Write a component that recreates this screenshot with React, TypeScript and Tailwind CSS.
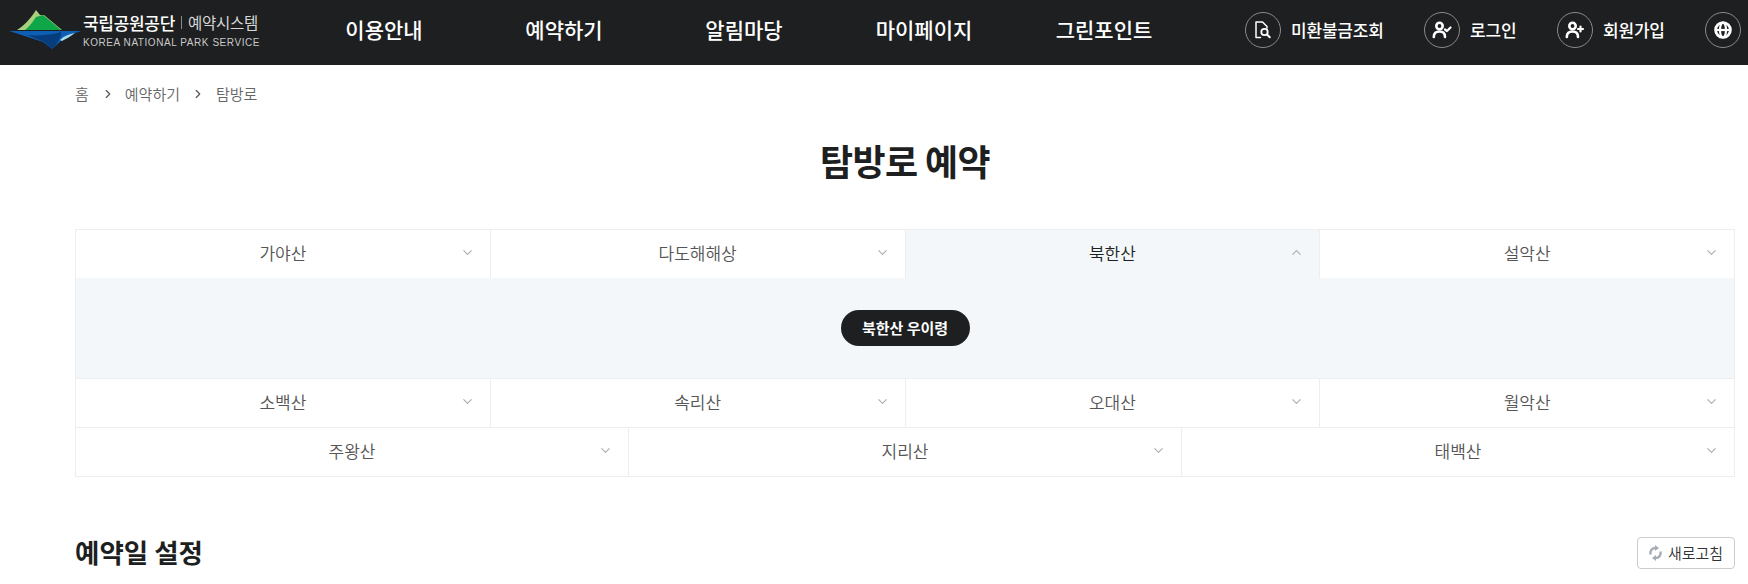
import {ChevronDown, ChevronRight, ChevronUp} from "lucide-react";

const font = {fontFamily: '"Noto Sans CJK KR", sans-serif'};

function Logo() {
    return (
        <div className="flex items-center">
            <svg width="74" height="42" viewBox="0 0 74 42" className="shrink-0">
                <path d="M8 21 C15 17 22 9 27 1 L31 6 L35 6 L53 21 Z" fill="#a8cf7c"/>
                <path d="M16 21 C21 17 25 11 27 8 L34 6 L52 21 Z" fill="#0fa64a"/>
                <path d="M0 22 L72 22 C62 25 58 28 53 31 L43 40 L34 33 C22 29 10 25 0 22 Z" fill="#0e5fb4"/>
                <path d="M18 26 C30 27 42 26 52 23 C53 28 48 35 43 40 L35 33 C29 30 23 28 18 26 Z" fill="#073d7c"/>
                <path d="M51 31 C55 27 60 25 66 24 C62 27 57 30 53 32 Z" fill="#a9dcec"/>
            </svg>
            <div className="flex flex-col">
                <div className="flex items-center h-[24px] leading-none">
                    <span className="text-white text-[17px] font-medium tracking-[-0.3px]">국립공원공단</span>
                    <span className="w-px h-[13px] bg-[#8a8a8a] mx-[6px]"></span>
                    <span className="text-[#d6d6d6] text-[15.5px] tracking-[-0.3px]">예약시스템</span>
                </div>
                <span className="mt-[1px] text-[#c9c9c9] text-[10px] leading-[14px] font-['Liberation_Sans'] tracking-[0.56px] whitespace-nowrap">KOREA NATIONAL PARK SERVICE</span>
            </div>
        </div>
    )
}

function DocSearchIcon() {
    return (
        <svg width="18" height="18" viewBox="0 0 18 18" fill="none" stroke="#ffffff" strokeWidth="1.5" strokeLinecap="round" strokeLinejoin="round">
            <path d="M6.5 16.5 H2 V1 H8.5 L13 5.5 V7"/>
            <circle cx="10.5" cy="11" r="3.2" strokeWidth="1.8"/>
            <path d="M13 13.5 L15.8 16.3" strokeWidth="2"/>
        </svg>
    )
}

function UserCheckIcon() {
    return (
        <svg width="20" height="18" viewBox="0 0 20 18" fill="none" stroke="#ffffff" strokeLinecap="round" strokeLinejoin="round">
            <circle cx="7.5" cy="5" r="3.2" strokeWidth="2.6"/>
            <path d="M1.8 16 C1.8 12 4 10.5 7.5 10.5 C11 10.5 13 12 13 16" strokeWidth="2.6"/>
            <path d="M13 8.5 L15 10 L18.5 6.5" strokeWidth="2.2"/>
        </svg>
    )
}

function UserPlusIcon() {
    return (
        <svg width="20" height="18" viewBox="0 0 20 18" fill="none" stroke="#ffffff" strokeLinecap="round" strokeLinejoin="round">
            <circle cx="7.5" cy="5" r="3.2" strokeWidth="2.6"/>
            <path d="M1.8 16 C1.8 12 4 10.5 7.5 10.5 C11 10.5 13 12 13 16" strokeWidth="2.6"/>
            <path d="M15.5 5.5 V10.5 M13 8 H18" strokeWidth="2.2"/>
        </svg>
    )
}

function GlobeIcon() {
    return (
        <svg width="18" height="18" viewBox="0 0 18 18" fill="none" stroke="#ffffff">
            <circle cx="9" cy="9" r="7.4" strokeWidth="2.8"/>
            <ellipse cx="9" cy="9" rx="3" ry="7.5" strokeWidth="2.2"/>
            <path d="M1.5 9 H16.5" strokeWidth="2.2"/>
        </svg>
    )
}

function RefreshIcon() {
    return (
        <svg width="13" height="16" viewBox="0 0 13 16" fill="none" stroke="#a6adb5" strokeWidth="2.4">
            <path d="M1.6 9.5 C0.8 5.5 3 3 6.5 3"/>
            <path d="M11.4 6.5 C12.2 10.5 10 13 6.5 13"/>
            <path d="M6 0 L10 3 L6 6 Z" fill="#a6adb5" stroke="none"/>
            <path d="M7 10 L3 13 L7 16 Z" fill="#a6adb5" stroke="none"/>
        </svg>
    )
}

function Util({label, icon, width}: {label?: string, icon: React.ReactNode, width: string}) {
    return (
        <a href="#" className={`flex items-center ${width}`}>
            <span className="size-[36px] rounded-full border border-[#8b8b8b] flex items-center justify-center shrink-0">{icon}</span>
            {label && <span className="ml-[10px] text-white text-[17px] tracking-[-0.2px] font-medium whitespace-nowrap">{label}</span>}
        </a>
    )
}

function Header() {
    return (
        <header className="h-[65px] pb-[5px] bg-[#1e1f21] flex items-center">
            <div className="ml-[9px] w-[260px]"><Logo/></div>
            <nav className="flex items-center ml-[25px] text-white text-[21px] font-medium whitespace-nowrap">
                <a href="#" className="w-[180px] text-center">이용안내</a>
                <a href="#" className="w-[180px] text-center">예약하기</a>
                <a href="#" className="w-[180px] text-center">알림마당</a>
                <a href="#" className="w-[180px] text-center">마이페이지</a>
                <a href="#" className="w-[180px] text-center">그린포인트</a>
            </nav>
            <div className="ml-auto mr-[7px] flex items-center">
                <Util width="w-[179px]" label="미환불금조회" icon={<DocSearchIcon/>}/>
                <Util width="w-[133px]" label="로그인" icon={<UserCheckIcon/>}/>
                <Util width="w-[148px]" label="회원가입" icon={<UserPlusIcon/>}/>
                <Util width="w-[36px]" icon={<GlobeIcon/>}/>
            </div>
        </header>
    )
}

function Tab({label, open}: {label: string, open?: boolean}) {
    return (
        <button className={`relative flex-1 h-[48px] pb-[3px] flex items-center justify-center text-[17px] font-[350] border-l first:border-l-0 border-[#eeeeee] ${open ? "bg-[#f4f7fa] text-[#1e1f21]" : "bg-white text-[#555555]"}`}>
            {label}
            {open
                ? <ChevronUp className="absolute right-[15px] size-[15px] text-[#a9adb3]" strokeWidth={1.75}/>
                : <ChevronDown className="absolute right-[15px] size-[15px] text-[#a9adb3]" strokeWidth={1.75}/>}
        </button>
    )
}

export default function App() {
    return (
        <div className="h-[584px] overflow-hidden bg-white" style={font}>
            <Header/>
            <main className="ml-[75px] w-[1660px]">
                <div className="flex items-center h-[58px] text-[15px] font-[350] text-[#666666]">
                    <span>홈</span>
                    <ChevronRight className="size-[14px] ml-[12px] mr-[10px] text-[#555555]"/>
                    <span>예약하기</span>
                    <ChevronRight className="size-[14px] mx-[11px] text-[#555555]"/>
                    <span>탐방로</span>
                </div>
                <h1 className="h-[106px] pt-[12px] text-center text-[36px] leading-[50px] tracking-[-0.6px] font-bold text-[#1e1f21]">탐방로 예약</h1>
                <div className="border border-[#eeeeee]">
                    <div className="flex">
                        <Tab label="가야산"/>
                        <Tab label="다도해해상"/>
                        <Tab label="북한산" open/>
                        <Tab label="설악산"/>
                    </div>
                    <div className="h-[101px] bg-[#f4f7fa] flex items-center justify-center border-b border-[#eeeeee]">
                        <a href="#" className="h-[36px] w-[129px] justify-center rounded-full bg-[#1e1f21] text-white text-[15px] font-bold flex items-center">북한산 우이령</a>
                    </div>
                    <div className="flex border-b border-[#eeeeee]">
                        <Tab label="소백산"/>
                        <Tab label="속리산"/>
                        <Tab label="오대산"/>
                        <Tab label="월악산"/>
                    </div>
                    <div className="flex">
                        <Tab label="주왕산"/>
                        <Tab label="지리산"/>
                        <Tab label="태백산"/>
                    </div>
                </div>
                <div className="flex items-center justify-between mt-[57px]">
                    <h2 className="text-[26.5px] leading-[36px] pb-[2px] font-bold text-[#1e1f21]">예약일 설정</h2>
                    <button className="h-[32px] w-[98px] rounded-[4px] border border-[#cccccc] flex items-center justify-center gap-[6px] text-[15px] font-[350] text-[#333333]">
                        <RefreshIcon/>
                        새로고침
                    </button>
                </div>
            </main>
        </div>
    )
}
